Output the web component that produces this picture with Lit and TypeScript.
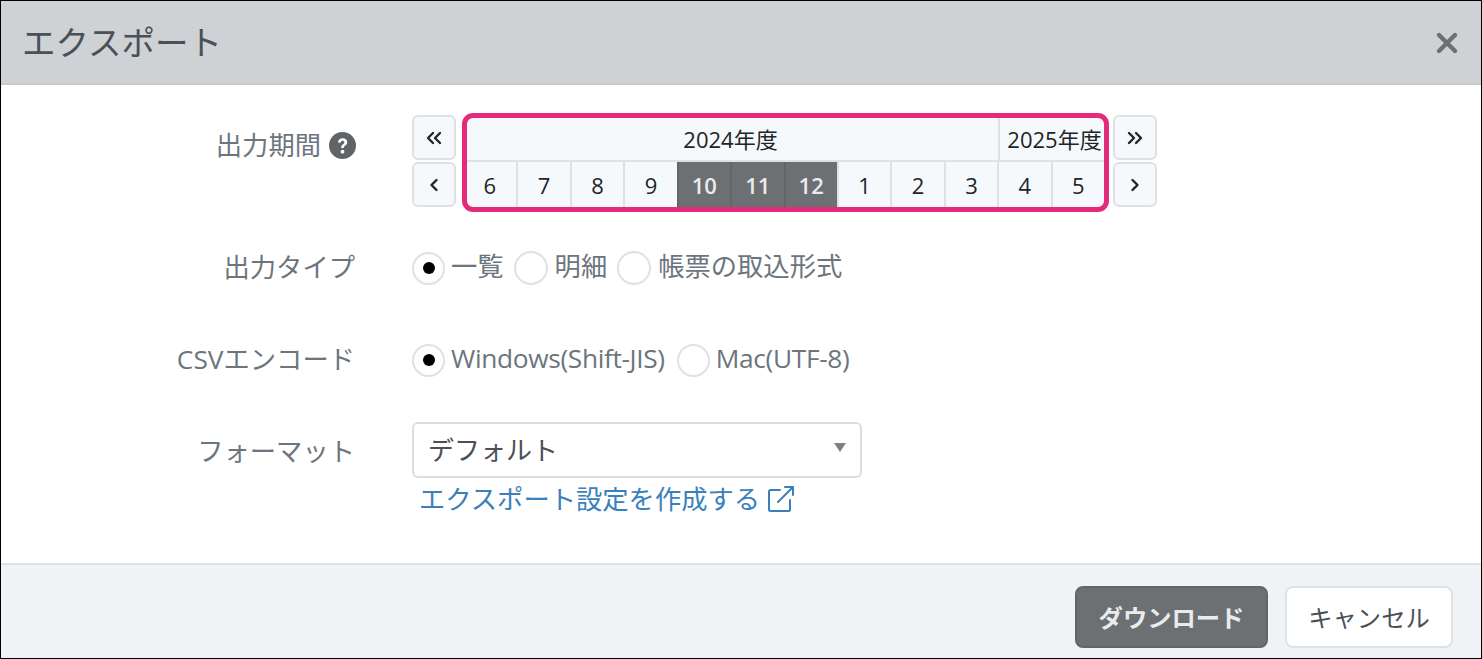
import { LitElement, html, css, svg } from "lit";
import { customElement } from "lit/decorators.js";

const months = [6, 7, 8, 9, 10, 11, 12, 1, 2, 3, 4, 5];
const active = new Set([10, 11, 12]);
const chev = (d: string) => html`<svg viewBox="0 0 20 20" width="20" height="20" fill="none" stroke="#212529" stroke-width="2.4" stroke-linecap="round" stroke-linejoin="round">${svg`<path d=${d}></path>`}</svg>`;

@customElement("app-root")
export class AppRoot extends LitElement {
  static styles = css`
    :host { display: block; width: 1482px; height: 659px; font-family: "Open Sans", "Noto Sans CJK JP", sans-serif; color: #6c757d; }
    * { box-sizing: border-box; }
    .frame { height: 659px; border: 1px solid #000; display: flex; flex-direction: column; background: #fff; overflow: hidden; }
    .head { height: 84px; flex: none; background: #ced2d5; border-bottom: 2px solid #c6cacd; display: flex; align-items: center; justify-content: space-between; padding: 0 22px 0 21px; }
    .title { font-size: 33.5px; color: #495057; line-height: 1; margin-top: 2px; }
    .close { display: flex; margin-top: 1px; }
    .body { flex: 1; padding-top: 30px; display: grid; grid-template-columns: 354px 1fr; grid-template-rows: 92px 92px 92px auto; column-gap: 57px; align-content: start; }
    .label { display: flex; justify-content: flex-end; align-items: center; gap: 8px; font-size: 26.3px; line-height: 1; height: 30px; margin-top: 45px; }
    .label.l1 { margin-top: 15px; margin-right: -1px; }
    .cal { display: flex; gap: 7px; align-items: flex-start; }
    .nav { display: flex; flex-direction: column; gap: 2px; width: 44px; flex: none; }
    .nav button { width: 44px; height: 45px; border: 2px solid #dee2e6; border-radius: 6px; background: #f6f9fb; padding: 0; display: flex; align-items: center; justify-content: center; }
    .wrap { position: relative; width: 641px; margin: 3px 2px 0 0; }
    .year { display: flex; height: 44px; font-size: 22px; color: #212529; background: #f6f9fb; border-bottom: 2px solid #dee2e6; }
    .y1 { flex: 0 0 535px; display: flex; align-items: center; justify-content: center; padding-bottom: 3px; }
    .y2 { flex: 1; display: flex; align-items: center; justify-content: center; border-left: 2px solid #dee2e6; white-space: nowrap; padding: 0 0 3px 5px; }
    .months { display: grid; grid-template-columns: repeat(12, 1fr); height: 45px; background: #f6f9fb; }
    .m { display: flex; align-items: center; justify-content: center; font-size: 22px; color: #212529; border-left: 2px solid #dee2e6; }
    .m:first-child { border-left: 0; }
    .m.on { background: #6c7073; color: #e9ecef; border-left-color: #62666a; font-weight: 600; }
    .hl { position: absolute; inset: -5px -5px -5px -1px; border: 5px solid #e32a7b; border-radius: 11px; pointer-events: none; }
    .radios { display: flex; align-items: center; height: 36px; margin-top: 43px; font-size: 26.3px; line-height: 1; }
    .radio { display: flex; align-items: center; gap: 7px; margin-right: 10px; }
    .radio:first-child { gap: 6px; }
    .radio .txt { margin-top: -4px; }
    .radio.wide { gap: 6px; margin-right: 12px; }
    .radio.wide .txt { letter-spacing: -0.35px; }
    .circle { width: 34px; height: 34px; border-radius: 50%; border: 2px solid #dee2e6; display: flex; align-items: center; justify-content: center; background: #fff; flex: none; }
    .circle.on, .radio.wide .circle { width: 33px; height: 33px; }
    .circle.on::after { content: ""; width: 12px; height: 12px; border-radius: 50%; background: #000; }
    .field { margin-top: 31px; width: 450px; }
    .select { height: 56px; border: 2px solid #d9dee3; border-radius: 6px; display: flex; align-items: center; justify-content: space-between; padding: 0 14px 0 14px; font-size: 26px; color: #495057; }
    .select span { margin-top: -2px; }
    .caret { width: 0; height: 0; border-left: 6px solid transparent; border-right: 6px solid transparent; border-top: 9px solid #7d8184; margin-top: -5px; }
    .link { display: flex; align-items: center; gap: 7px; margin: 6px 0 0 7px; font-size: 26.3px; line-height: 30px; color: #3a80bc; white-space: nowrap; }
    .foot { height: 95px; flex: none; background: #eff3f6; border-top: 2px solid #dee2e6; display: flex; justify-content: flex-end; align-items: flex-start; gap: 17px; padding: 21px 28px 0 0; }
    .btn { height: 62px; border-radius: 8px; display: flex; align-items: center; justify-content: center; font-size: 24.3px; padding-bottom: 2px; }
    .primary { width: 193px; background: #6c7073; border: 2px solid #62666a; color: #e9ecef; font-weight: 600; }
    .ghost { width: 168px; background: #fff; border: 2px solid #dee2e6; color: #495057; }
  `;

  radio(label: string, on = false, extra = "") {
    return html`<div class="radio ${extra}"><span class="circle ${on ? "on" : ""}"></span><span class="txt">${label}</span></div>`;
  }

  render() {
    return html`
      <div class="frame">
        <div class="head">
          <div class="title">エクスポート</div>
          <div class="close">
            <svg viewBox="0 0 24 24" width="24" height="24" fill="none" stroke="#6c7073" stroke-width="4.4" stroke-linecap="round"><path d="M4 4 20 20M20 4 4 20"></path></svg>
          </div>
        </div>
        <div class="body">
          <div class="label l1">出力期間
            <svg viewBox="0 0 26 26" width="27" height="27"><circle cx="13" cy="13" r="13" fill="#5f6468"></circle><path d="M8.600 10.200c0-2.800 2.100-4.300 4.500-4.300 2.500 0 4.500 1.500 4.500 3.900 0 3.100-3.300 3-3.300 5.500h-2.600c0-3.700 3.100-3.500 3.100-5.300 0-.9-.8-1.500-1.700-1.500-1 0-1.800.7-1.900 1.800Z" fill="#fff"></path><circle cx="13" cy="19" r="1.800" fill="#fff"></circle></svg>
          </div>
          <div class="cal">
            <div class="nav">
              <button aria-label="前年">${chev("M9 5 4 10l5 5M16 5l-5 5 5 5")}</button>
              <button aria-label="前月">${chev("M12.500 5 7.500 10l5 5")}</button>
            </div>
            <div class="wrap">
              <div class="year"><div class="y1">2024年度</div><div class="y2">2025年度</div></div>
              <div class="months">
                ${months.map((m) => html`<div class="m ${active.has(m) ? "on" : ""}">${m}</div>`)}
              </div>
              <div class="hl"></div>
            </div>
            <div class="nav">
              <button aria-label="翌年">${chev("M4 5l5 5-5 5M11 5l5 5-5 5")}</button>
              <button aria-label="翌月">${chev("M7.500 5l5 5-5 5")}</button>
            </div>
          </div>

          <div class="label">出力タイプ</div>
          <div class="radios">
            ${this.radio("一覧", true)}${this.radio("明細")}${this.radio("帳票の取込形式")}
          </div>

          <div class="label">CSVエンコード</div>
          <div class="radios">
            ${this.radio("Windows(Shift-JIS)", true, "wide")}${this.radio("Mac(UTF-8)", false, "wide")}
          </div>

          <div class="label">フォーマット</div>
          <div class="field">
            <div class="select"><span>デフォルト</span><i class="caret"></i></div>
            <div class="link">エクスポート設定を作成する
              <svg viewBox="0 0 28 28" width="28" height="28" fill="none" stroke="#3a80bc" stroke-width="2" stroke-linecap="round" stroke-linejoin="round"><path d="M13 5H3.500A1.500 1.500 0 0 0 2 6.500v18A1.500 1.500 0 0 0 3.500 26h18a1.500 1.500 0 0 0 1.500-1.500V15M11 17 26 2M18 2h8v8"></path></svg>
            </div>
          </div>
        </div>
        <div class="foot">
          <div class="btn primary">ダウンロード</div>
          <div class="btn ghost">キャンセル</div>
        </div>
      </div>
    `;
  }
}
